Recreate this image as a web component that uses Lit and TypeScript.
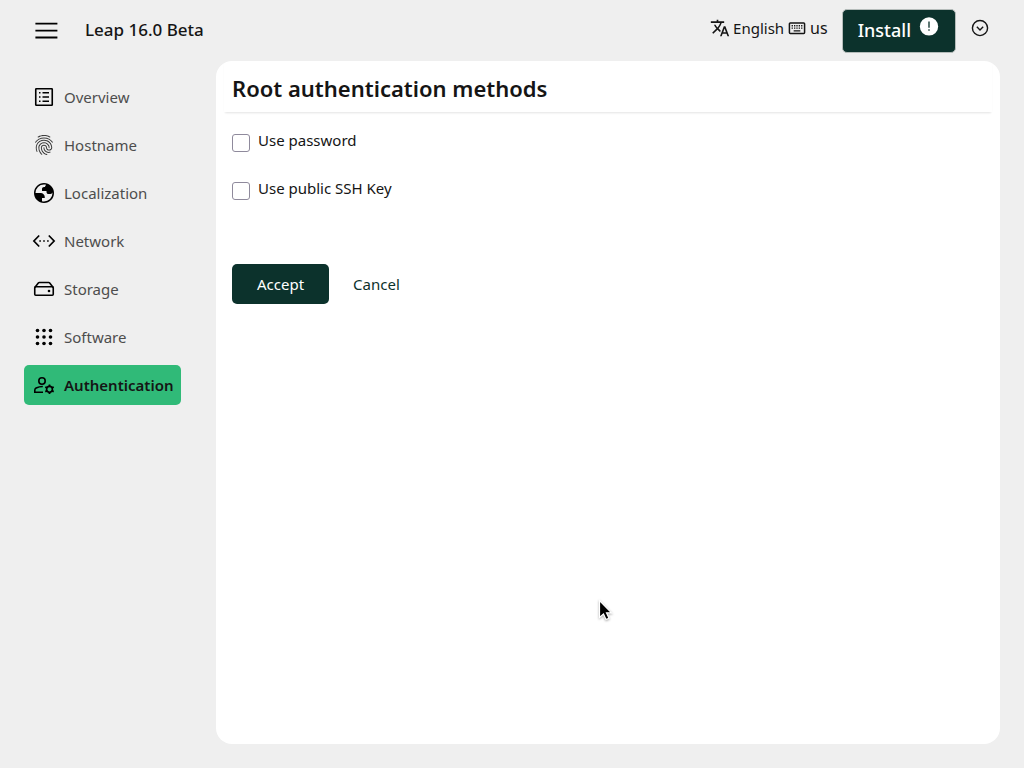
import { LitElement, html, css, svg } from "lit";
import { customElement, property, state } from "lit/decorators.js";

const icons: Record<string, unknown> = {
  overview: svg`<rect x="3.75" y="3.75" width="16.5" height="16.5" rx=".6" fill="none" stroke="currentColor" stroke-width="1.6"/><path d="M7 7h1.5v1.6H7zM7 11.2h1.5v1.6H7zM7 15.4h1.5V17H7zM10.5 7H17v1.6h-6.5zM10.5 11.2H17v1.6h-6.5zM10.5 15.4H17V17h-6.5z"/>`,
  hostname: svg`<path stroke="#efefef" stroke-width=".3" d="M17.81 4.47c-.08 0-.16-.02-.23-.06C15.66 3.42 14 3 12.01 3c-1.98 0-3.86.47-5.57 1.41-.24.13-.54.04-.68-.2-.13-.24-.04-.55.2-.68C7.82 2.52 9.86 2 12.01 2c2.13 0 3.99.47 6.03 1.52.25.13.34.43.21.67-.09.18-.26.28-.44.28zM3.5 9.72c-.1 0-.2-.03-.29-.09-.23-.16-.28-.47-.12-.7.99-1.4 2.25-2.5 3.75-3.27C9.98 4.04 14 4.03 17.15 5.65c1.5.77 2.76 1.86 3.75 3.25.16.22.11.54-.12.7-.23.16-.54.11-.7-.12-.9-1.26-2.04-2.25-3.39-2.94-2.87-1.47-6.54-1.47-9.4.01-1.36.7-2.5 1.7-3.4 2.96-.08.14-.23.21-.39.21zm6.25 12.07c-.13 0-.26-.05-.35-.15-.87-.87-1.34-1.43-2.01-2.64-.69-1.23-1.05-2.73-1.05-4.34 0-2.97 2.54-5.39 5.66-5.39s5.66 2.42 5.66 5.39c0 .28-.22.5-.5.5s-.5-.22-.5-.5c0-2.42-2.09-4.39-4.66-4.39-2.57 0-4.66 1.97-4.66 4.39 0 1.44.32 2.77.93 3.85.64 1.15 1.08 1.64 1.85 2.42.19.2.19.51 0 .71-.11.1-.24.15-.37.15zm7.17-1.85c-1.19 0-2.24-.3-3.1-.89-1.49-1.01-2.38-2.65-2.38-4.39 0-.28.22-.5.5-.5s.5.22.5.5c0 1.41.72 2.74 1.94 3.56.71.48 1.54.71 2.54.71.24 0 .64-.03 1.04-.1.27-.05.53.13.58.41.05.27-.13.53-.41.58-.57.11-1.07.12-1.21.12zM14.91 22c-.04 0-.09-.01-.13-.02-1.59-.44-2.63-1.03-3.72-2.1-1.4-1.39-2.17-3.24-2.17-5.22 0-1.62 1.38-2.94 3.08-2.94 1.7 0 3.08 1.32 3.08 2.94 0 1.07.93 1.94 2.08 1.94s2.08-.87 2.08-1.94c0-3.77-3.25-6.83-7.25-6.83-2.84 0-5.44 1.58-6.61 4.03-.39.81-.59 1.76-.59 2.8 0 .78.07 2.01.67 3.61.1.26-.03.55-.29.64-.26.1-.55-.04-.64-.29-.49-1.31-.73-2.61-.73-3.96 0-1.2.23-2.29.68-3.24 1.33-2.79 4.28-4.6 7.51-4.6 4.55 0 8.25 3.51 8.25 7.83 0 1.62-1.38 2.94-3.08 2.94s-3.08-1.32-3.08-2.94c0-1.07-.93-1.94-2.08-1.94s-2.08.87-2.08 1.94c0 1.71.66 3.31 1.87 4.51.95.94 1.86 1.46 3.27 1.85.27.07.42.35.35.61-.05.23-.26.38-.47.38z"/>`,
  localization: svg`<g transform="translate(0 24) scale(.025)"><path d="M480-80q-83 0-156-31.500T197-197q-54-54-85.500-127T80-480q0-83 31.500-156T197-763q54-54 127-85.500T480-880q83 0 156 31.500T763-763q54 54 85.500 127T880-480q0 83-31.500 156T763-197q-54 54-127 85.500T480-80Zm0-60q142 0 241-99t99-241q0-7-.5-14.500T819-507q-5 29-27 48t-52 19h-80q-33 0-56.500-23.500T580-520v-40H400v-80q0-33 23.500-56.500T480-720h40q0-23 12.500-40.500T563-809q-20-5-40.500-8t-42.500-3q-142 0-241 99t-99 241h210q66 0 113 47t47 113v40H400v130q20 5 39.500 7.500T480-140Z"/></g>`,
  network: svg`<path d="M7.200 6.500 1.900 12l5.300 5.500M16.800 6.500l5.300 5.500-5.300 5.500" fill="none" stroke="currentColor" stroke-width="1.700"/><path d="M7.300 11.200h1.600v1.600H7.300zM11.200 11.200h1.600v1.600h-1.600zM15.100 11.200h1.600v1.600h-1.600z"/>`,
  storage: svg`<rect x="2.750" y="9.700" width="18.500" height="8.500" rx="1" fill="none" stroke="currentColor" stroke-width="1.600"/><path d="M2.800 10.500 6.300 6q.4-.5 1-.5h9.400q.6 0 1 .5l3.500 4.500" fill="none" stroke="currentColor" stroke-width="1.600"/><circle cx="17" cy="14" r="1.300"/>`,
  software: svg`${[5.5, 12, 18.5].map((y) => [5.5, 12, 18.5].map((x) => svg`<circle cx=${x} cy=${y} r="1.800"/>`))}`,
  authentication: svg`<g fill="none" stroke="currentColor" stroke-width="1.600"><circle cx="10" cy="8" r="3.200"/><path d="M11 19.200H2.800v-2q0-1.500 1.300-2.200 3-1.500 6.700-1.500"/><circle cx="17.500" cy="16.300" r="2.900"/></g><path d="M16.700 11.500h1.600l.4 2.200h-2.400zM16.700 21.100h1.600l.4-2.200h-2.400zM12.900 14.600l.8-1.400 2.100.8-1.200 2zM22.100 18l-.8 1.400-2.100-.8 1.200-2zM22.100 14.600l-.8-1.400-2.100.8 1.200 2zM12.900 18l.8 1.400 2.100-.8-1.200-2z"/>`,
  translate: svg`<path d="m12.870 15.070-2.540-2.510.03-.03c1.740-1.940 2.980-4.170 3.710-6.530H17V4h-7V2H8v2H1v1.990h11.170C11.500 7.920 10.440 9.750 9 11.350 8.070 10.320 7.300 9.190 6.690 8h-2c.73 1.630 1.730 3.170 2.980 4.560l-5.090 5.020L4 19l5-5 3.110 3.110.76-2.040zM18.500 10h-2L12 22h2l1.120-3h4.750L21 22h2l-4.500-12zm-2.620 7 1.620-4.330L19.120 17h-3.240z"/>`,
  keyboard: svg`<rect x="2.900" y="5.900" width="18.200" height="12.600" rx="1" fill="none" stroke="currentColor" stroke-width="1.800"/><path d="M5.500 8.500h1.600v1.600H5.500zM8.400 8.500H10v1.600H8.400zM11.200 8.500h1.600v1.600h-1.600zM14 8.500h1.600v1.600H14zM16.900 8.500h1.600v1.600h-1.600zM5.500 11.300h1.600v1.600H5.500zM8.400 11.300H10v1.600H8.400zM11.200 11.300h1.600v1.600h-1.600zM14 11.300h1.600v1.600H14zM16.900 11.300h1.600v1.600h-1.600zM8 14.700h8v1.500H8z"/>`,
  menu: svg`<path d="M1.400 4.700h22M1.400 11.700h22M1.400 18.500h22" stroke="currentColor" stroke-width="1.800"/>`,
  expand: svg`<circle cx="12" cy="12" r="9.100" fill="none" stroke="currentColor" stroke-width="1.700"/><path d="m8.200 10.600 3.800 3.700 3.800-3.700" fill="none" stroke="currentColor" stroke-width="1.700"/>`,
  alert: svg`<circle cx="12" cy="12.500" r="11"/><path d="M11.200 6.500h1.600v7.600h-1.600zM11.200 16h1.600v1.800h-1.600z" fill="#0c322c"/>`,
};

@customElement("ui-icon")
export class UiIcon extends LitElement {
  @property() name = "";
  @property() size = "m";
  static styles = css`
    :host { display: inline-flex; flex: none; width: 24px; height: 24px; }
    :host([size="s"]) { width: 20px; height: 20px; }
    svg { width: 100%; height: 100%; fill: currentColor; }
  `;
  render() {
    return html`<svg viewBox="0 0 24 24" aria-hidden="true">${icons[this.name]}</svg>`;
  }
}

@customElement("app-root")
export class AppRoot extends LitElement {
  @state() private current = "authentication";

  private pages = ["Overview", "Hostname", "Localization", "Network", "Storage", "Software", "Authentication"];

  static styles = css`
    * { box-sizing: border-box; }
    :host {
      display: grid;
      grid-template-columns: 216px 1fr;
      grid-template-rows: auto 1fr;
      min-height: 100vh;
      background: #efefef;
      color: #151515;
      font: 15px/24px "Noto Sans", sans-serif;
    }
    button { font: inherit; color: inherit; border: 0; background: none; padding: 0; cursor: pointer; }
    a { color: inherit; text-decoration: none; }
    header {
      grid-column: 1 / -1;
      display: flex;
      align-items: center;
      height: 61px;
      padding: 0 34px;
    }
    .menu { display: flex; color: #000; }
    .product { margin: 0 auto 0 27px; padding-bottom: 1px; font-size: 17px; font-weight: 500; }
    .locale { display: flex; align-items: center; gap: 3px; margin-right: 14px; padding-bottom: 5px; }
    .layout { font-size: 16px; }
    .install {
      display: flex;
      gap: 8px;
      height: 44px;
      padding: 6px 16px 0 15px;
      border: 1px solid #b5bcba;
      border-radius: 5px;
      background: #0c322c;
      color: #fff;
      font-size: 18px;
      font-weight: 500;
      line-height: 28px;
    }
    .more { display: flex; margin-left: 14px; padding-bottom: 6px; }
    nav { display: flex; flex-direction: column; align-items: flex-start; gap: 8px; padding: 16px 24px; }
    .link { display: flex; align-items: center; gap: 8px; height: 40px; padding: 0 8px; border-radius: 5px; color: #4d4d4d; }
    .link ui-icon { color: #000; }
    .link.active { background: #30ba78; color: #151515; font-weight: 600; }
    main { margin: 0 24px 24px 0; border-radius: 16px; background: #fff; overflow: hidden; }
    .title { margin: 0 8px; padding: 11px 8px 8px; box-shadow: 0 2px 2px -1px #0000001c; }
    h1 { margin: 0; font-size: 22px; line-height: 32px; font-weight: 600; }
    form { display: flex; flex-direction: column; gap: 24px; padding: 16px; }
    .check { display: flex; gap: 8px; height: 24px; }
    .check input {
      appearance: none;
      width: 18px;
      height: 18px;
      margin: 6px 0 0;
      border: 1px solid #8f8a9c;
      border-radius: 3px;
      background: #fff;
    }
    .check input:checked { background: #0c322c; }
    .actions { display: flex; margin-top: 40px; }
    .actions button { height: 40px; padding: 0 24px; border-radius: 5px; color: #0c322c; }
    .actions .primary { padding: 0 25px; background: #0c322c; color: #fff; }
    .pointer { position: absolute; left: 597px; top: 598px; width: 16px; height: 24px; filter: drop-shadow(0 1px 1px #00000055); pointer-events: none; }
  `;

  render() {
    return html`
      <header>
        <button class="menu" aria-label="Menu"><ui-icon name="menu"></ui-icon></button>
        <div class="product">Leap 16.0 Beta</div>
        <button class="locale">
          <ui-icon name="translate" size="s"></ui-icon><span>English</span>
          <ui-icon name="keyboard" size="s"></ui-icon><span class="layout">us</span>
        </button>
        <button class="install"><span>Install</span><ui-icon name="alert" size="s"></ui-icon></button>
        <button class="more" aria-label="More options"><ui-icon name="expand" size="s"></ui-icon></button>
      </header>
      <nav>
        ${this.pages.map((page) => {
          const id = page.toLowerCase();
          return html`<a class="link ${id === this.current ? "active" : ""}" href="#${id}"
            @click=${() => (this.current = id)}><ui-icon name=${id}></ui-icon><span>${page}</span></a>`;
        })}
      </nav>
      <main>
        <div class="title"><h1>Root authentication methods</h1></div>
        <form @submit=${(e: Event) => e.preventDefault()}>
          <div class="check"><input type="checkbox" id="password" /><label for="password">Use password</label></div>
          <div class="check"><input type="checkbox" id="ssh" /><label for="ssh">Use public SSH Key</label></div>
          <div class="actions">
            <button class="primary" type="submit">Accept</button>
            <button type="button">Cancel</button>
          </div>
        </form>
      </main>
      <svg class="pointer" viewBox="0 0 16 24" aria-hidden="true">
        <path d="M2.500 2.500v17l4-3.500 2.500 5.500 3-1.300-2.500-5.400h5z" fill="#000" stroke="#fff" stroke-width="1.200"/>
      </svg>
    `;
  }
}
